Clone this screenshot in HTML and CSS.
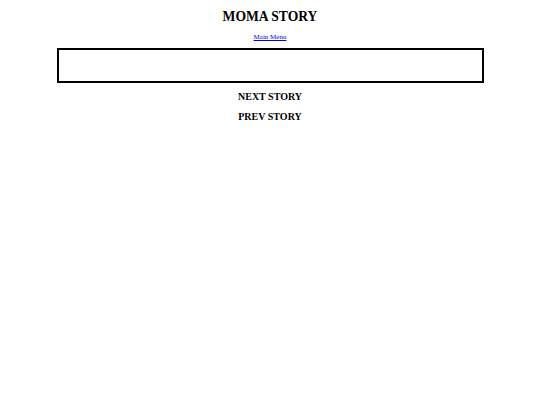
FILE: index.html
```html
<!DOCTYPE html>
<html>
<head>
<meta charset="utf-8">
<title>MOMA STORY</title>
<link rel="stylesheet" href="styles.css">
</head>
<body>
<div class="page">
  <h1 class="title">MOMA STORY</h1>
  <a class="menu-link" href="#">Main Menu</a>
  <div class="story-box"></div>
  <div class="nav-item">NEXT STORY</div>
  <div class="nav-item">PREV STORY</div>
</div>
</body>
</html>
```

FILE: styles.css
```css
html, body {
  margin: 0;
  padding: 0;
  background: #fff;
}

.page {
  display: flex;
  flex-direction: column;
  align-items: center;
  font-family: "Liberation Serif", "Times New Roman", serif;
  color: #000;
  padding-top: 8px;
}

.title {
  margin: 0;
  font-size: 13.6px;
  line-height: 17px;
  font-weight: bold;
}

.menu-link {
  margin-top: 8px;
  font-size: 7px;
  line-height: 8px;
  color: #00e;
}

.story-box {
  margin-top: 7px;
  width: 423px;
  height: 31px;
  border: 2px solid #000;
}

.nav-item {
  margin-top: 8px;
  font-size: 10px;
  line-height: 12px;
  font-weight: bold;
}

.nav-item + .nav-item {
  margin-top: 8px;
}
```
